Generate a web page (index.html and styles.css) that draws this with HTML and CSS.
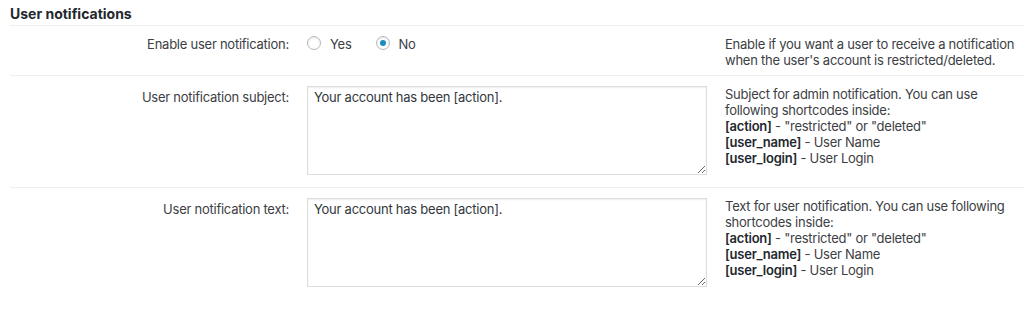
FILE: index.html
```html
<!DOCTYPE html>
<html lang="en">
<head>
    <meta charset="UTF-8">
    <meta name="viewport" content="width=device-width, initial-scale=1.0">
    <title>User notifications</title>
    <link rel="stylesheet" href="styles.css">
</head>
<body>
    <div class="settings">
        <h2 class="section-title">User notifications</h2>

        <div class="form-row compact">
            <div class="form-label">Enable user notification:</div>
            <div class="form-field radios">
                <label class="radio-option"><input type="radio" name="user_notify" value="yes"> Yes</label>
                <label class="radio-option"><input type="radio" name="user_notify" value="no" checked> No</label>
            </div>
            <div class="form-help">Enable if you want a user to receive a notification when the user's account is restricted/deleted.</div>
        </div>

        <div class="form-row">
            <label class="form-label label-textarea" for="notify_subject">User notification subject:</label>
            <div class="form-field">
                <textarea id="notify_subject">Your account has been [action].</textarea>
            </div>
            <div class="form-help">
                Subject for admin notification. You can use following shortcodes inside:<br>
                <strong>[action]</strong> - "restricted" or "deleted"<br>
                <strong>[user_name]</strong> - User Name<br>
                <strong>[user_login]</strong> - User Login
            </div>
        </div>

        <div class="form-row last">
            <label class="form-label label-textarea" for="notify_text">User notification text:</label>
            <div class="form-field">
                <textarea id="notify_text">Your account has been [action].</textarea>
            </div>
            <div class="form-help">
                Text for user notification. You can use following shortcodes inside:<br>
                <strong>[action]</strong> - "restricted" or "deleted"<br>
                <strong>[user_name]</strong> - User Name<br>
                <strong>[user_login]</strong> - User Login
            </div>
        </div>
    </div>
</body>
</html>
```

FILE: styles.css
```css
body {
    margin: 0;
    background-color: #fff;
    font-family: Inter, "Noto Sans", Arial, sans-serif;
    font-size: 13px;
    letter-spacing: -0.25px;
    color: #3c4044;
}
.settings {
    padding-left: 10px;
}
.section-title {
    margin: 0;
    padding: 6px 0 3px;
    font-size: 14px;
    line-height: 16px;
    font-weight: 700;
    letter-spacing: 0;
    color: #23282d;
    border-bottom: 1px solid #eeeeee;
}
.form-row {
    display: grid;
    grid-template-columns: 279px 400px 1fr;
    column-gap: 18px;
    padding: 10px 0 12px;
    border-bottom: 1px solid #eeeeee;
}
.form-row.compact {
    padding-bottom: 7px;
}
.form-row.last {
    border-bottom: none;
}
.form-label {
    text-align: right;
    line-height: 16px;
}
.label-textarea {
    padding-top: 3px;
}
.form-help {
    line-height: 16px;
}
.form-help strong {
    font-weight: 600;
    color: #23282d;
}
.radios {
    display: flex;
    align-items: center;
    gap: 24px;
    height: 16px;
}
.radio-option {
    display: flex;
    align-items: center;
    gap: 9px;
    line-height: 16px;
}
.radio-option input {
    appearance: none;
    -webkit-appearance: none;
    margin: 0;
    width: 14px;
    height: 14px;
    border: 1px solid #b4b9be;
    border-radius: 50%;
    background: #fff;
    box-shadow: inset 0 1px 2px rgba(0, 0, 0, 0.1);
    position: relative;
    top: -1px;
}
.radio-option input:checked::before {
    content: "";
    position: absolute;
    left: 3px;
    top: 3px;
    width: 6px;
    height: 6px;
    border-radius: 50%;
    background-color: #1e8cbe;
}
textarea {
    display: block;
    box-sizing: border-box;
    width: 400px;
    height: 89px;
    margin: 0;
    padding: 2px 6px;
    border: 1px solid #dddddd;
    box-shadow: inset 0 1px 2px rgba(0, 0, 0, 0.07);
    font-family: inherit;
    font-size: 13px;
    letter-spacing: -0.25px;
    line-height: 16px;
    color: #32373c;
    resize: both;
}
```
